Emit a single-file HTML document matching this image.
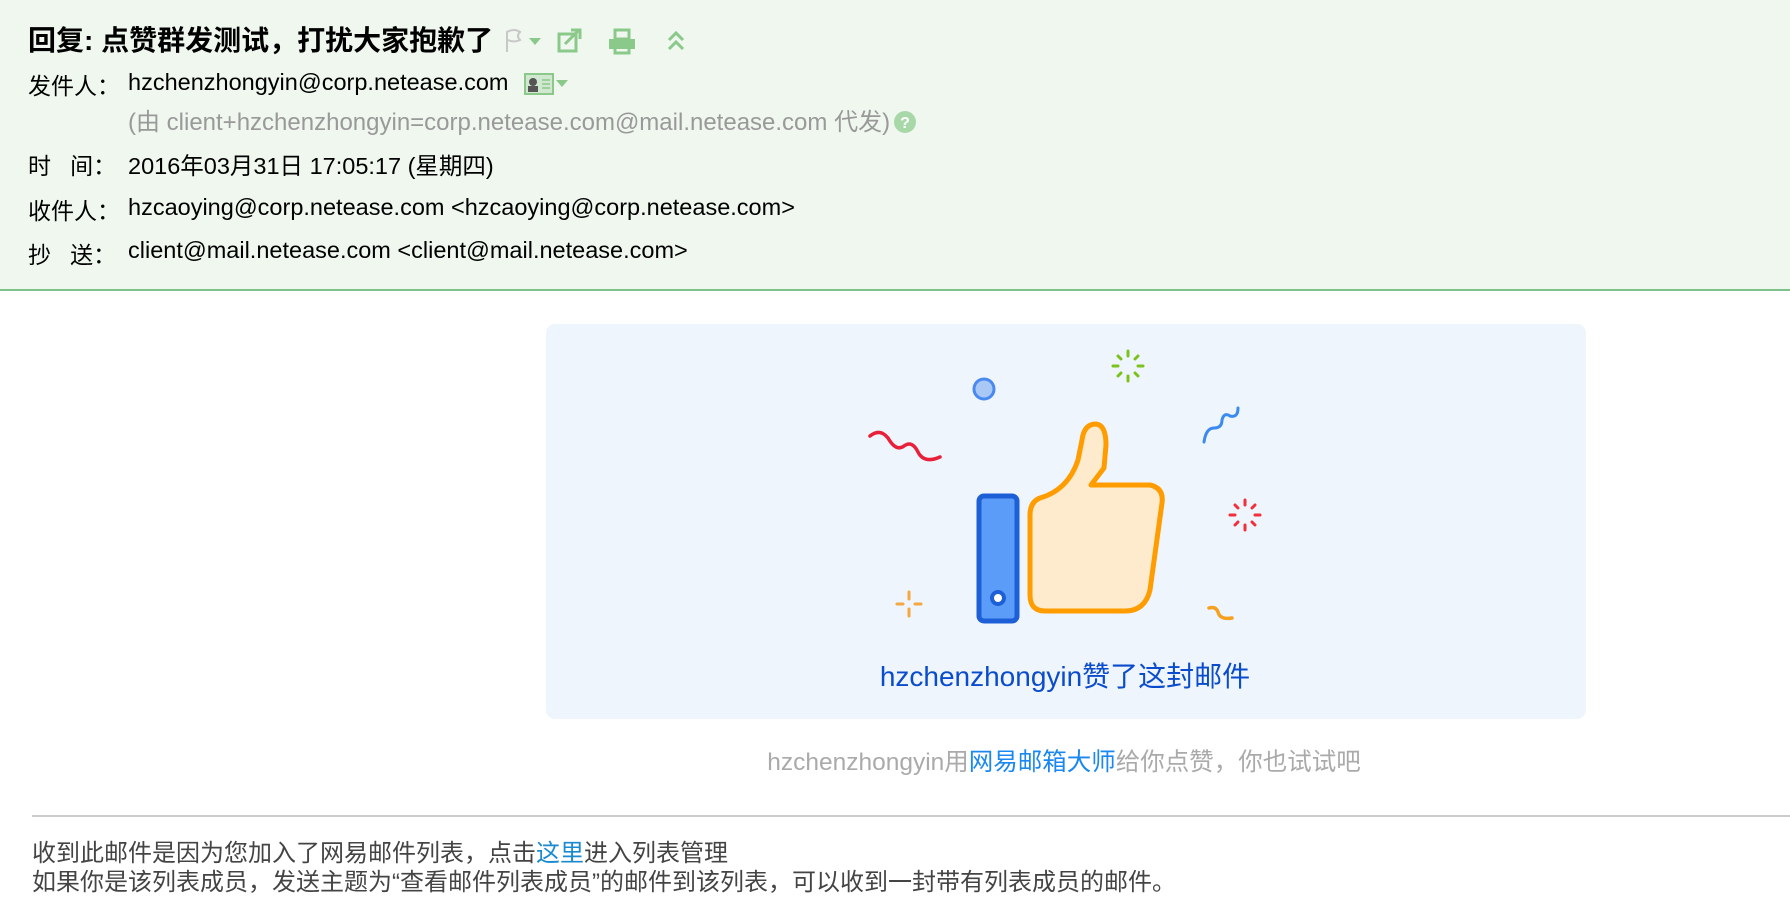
<!DOCTYPE html>
<html><head><meta charset="utf-8"><style>
*{margin:0;padding:0;box-sizing:border-box}
body{width:1790px;height:916px;background:#fff;font-family:"Liberation Sans","Noto Sans CJK SC",sans-serif;position:relative;overflow:hidden;color:#000}
.hd{position:absolute;left:0;top:0;width:1790px;height:291px;background:#eff7ef;border-bottom:2px solid #7cc38a}
.t{position:absolute;white-space:nowrap}
.title{left:28px;top:19px;font-size:28px;font-weight:bold}
.lb{left:28px;font-size:23px}
.v{left:128px;font-size:23.5px}
.card{position:absolute;left:546px;top:324px;width:1040px;height:395px;background:#eff5fd;border-radius:9px}
</style></head><body>
<div class="hd">
<div class="t title">回复: 点赞群发测试，打扰大家抱歉了</div>
<svg style="position:absolute;left:500px;top:24px" width="200" height="90" viewBox="500 24 200 90">
<path d="M507 52 L507 32 Q514 28 520 32 Q516 36 520 40 Q514 43 508 40" fill="none" stroke="#c8c8c8" stroke-width="2"/>
<path d="M529 38 L541 38 L535 45 Z" fill="#8bc98b"/>
<rect x="559" y="34" width="17" height="17" fill="none" stroke="#8bc98b" stroke-width="3"/>
<path d="M565 44 L579 30 M571 30 L580 30 L580 39" fill="none" stroke="#8bc98b" stroke-width="3"/>
<rect x="609" y="39" width="26" height="10" fill="#8bc98b"/>
<rect x="615" y="30" width="14" height="9" fill="none" stroke="#8bc98b" stroke-width="3"/>
<rect x="615" y="47" width="14" height="6" fill="none" stroke="#8bc98b" stroke-width="3"/>
<path d="M669 40 L676 33 L683 40 M669 49 L676 42 L683 49" fill="none" stroke="#8bc98b" stroke-width="3"/>
<rect x="525" y="74" width="28" height="20" fill="#cfe8cf" stroke="#8bc98b" stroke-width="2"/>
<circle cx="533" cy="82" r="4" fill="#555"/><rect x="528" y="86" width="10" height="6" fill="#555"/>
<path d="M542 80 H550 M542 84 H550 M542 88 H550" stroke="#8bc98b" stroke-width="1.5"/>
<path d="M556 80 L568 80 L562 87 Z" fill="#8bc98b"/>
</svg>
<div class="t lb" style="top:67px">发件人：</div>
<div class="t v" style="top:69px">hzchenzhongyin@corp.netease.com</div>
<div class="t v" style="top:102px;color:#999;font-size:24px">(由 client+hzchenzhongyin=corp.netease.com@mail.netease.com 代发)<svg style="vertical-align:-3px;margin-left:4px" width="22" height="22"><circle cx="11" cy="11" r="11" fill="#a8d8a8"/><text x="11" y="17" font-size="16" font-weight="bold" fill="#fff" text-anchor="middle" font-family="Liberation Sans">?</text></svg></div>
<div class="t lb" style="top:147px">时&nbsp;&nbsp;&nbsp;间：</div>
<div class="t v" style="top:147px">2016年03月31日 17:05:17 (星期四)</div>
<div class="t lb" style="top:192px">收件人：</div>
<div class="t v" style="top:194px">hzcaoying@corp.netease.com &lt;hzcaoying@corp.netease.com&gt;</div>
<div class="t lb" style="top:236px">抄&nbsp;&nbsp;&nbsp;送：</div>
<div class="t v" style="top:237px">client@mail.netease.com &lt;client@mail.netease.com&gt;</div>
</div>
<div class="card"></div>
<svg style="position:absolute;left:0;top:0" width="1790" height="916">
<circle cx="984" cy="389" r="10" fill="#a9c8f5" stroke="#4a8af0" stroke-width="3"/>
<g stroke="#7cc21a" stroke-width="3" stroke-linecap="round">
<path d="M1128 351 v5 M1128 376 v5 M1113 366 h5 M1138 366 h5 M1118 356 l3 3 M1135 373 l3 3 M1138 356 l-3 3 M1118 376 l3 -3"/></g>
<g stroke="#f0303a" stroke-width="3" stroke-linecap="round">
<path d="M1245 500 v5 M1245 525 v5 M1230 515 h5 M1255 515 h5 M1235 505 l3 3 M1252 522 l3 3 M1255 505 l-3 3 M1235 525 l3 -3"/></g>
<path d="M870 436 Q880 428 888 438 Q896 452 904 446 Q912 440 918 452 Q924 464 940 457" fill="none" stroke="#e8203a" stroke-width="3.5" stroke-linecap="round"/>
<path d="M1204 442 Q1206 428 1214 428 Q1222 428 1222 420 Q1224 412 1230 416 Q1238 418 1238 408" fill="none" stroke="#3a8af0" stroke-width="3" stroke-linecap="round"/>
<path d="M1209 608 Q1216 606 1218 612 Q1220 620 1232 618" fill="none" stroke="#f5a020" stroke-width="3.5" stroke-linecap="round"/>
<g stroke="#f5a840" stroke-width="3" stroke-linecap="round"><path d="M909 592 v7 M909 609 v7 M897 604 h6 M915 604 h6"/></g>
<rect x="979" y="496" width="38" height="125" rx="5" fill="#5b9cf8" stroke="#1c5fd6" stroke-width="5"/>
<circle cx="998" cy="598" r="6" fill="#fff" stroke="#1c5fd6" stroke-width="4"/>
<path d="M1040 498 Q1068 490 1078 460 L1082 440 Q1084 424 1096 424 Q1106 425 1106 445 L1104 468 L1091 485 L1150 485 Q1164 488 1162 503 L1150 590 Q1145 611 1125 611 L1045 611 Q1030 611 1030 595 L1030 515 Q1030 502 1040 498 Z" fill="#feebcd" stroke="#ff9c00" stroke-width="5" stroke-linejoin="round"/>
</svg>
<div class="t" style="left:0;width:2130px;text-align:center;top:655px;font-size:28px;color:#0a4ccc">hzchenzhongyin赞了这封邮件</div>
<div class="t" style="left:0;width:2128px;text-align:center;top:743px;font-size:24.5px;color:#aaa">hzchenzhongyin用<span style="color:#1a88f0">网易邮箱大师</span>给你点赞，你也试试吧</div>
<div style="position:absolute;left:32px;top:815px;width:1758px;height:2px;background:#ccc"></div>
<div class="t" style="left:32px;top:839px;font-size:24px;color:#444;line-height:29px">收到此邮件是因为您加入了网易邮件列表，点击<span style="color:#1a8ad0">这里</span>进入列表管理<br>如果你是该列表成员，发送主题为“查看邮件列表成员”的邮件到该列表，可以收到一封带有列表成员的邮件。</div>
</body></html>
